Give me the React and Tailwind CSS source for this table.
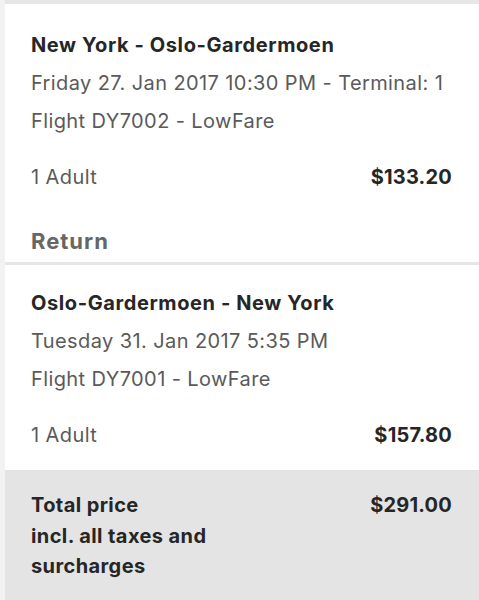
export default function App() {
  const font = { fontFamily: "Inter, 'Open Sans', sans-serif" };
  return (
    <div className="w-[479px] h-[600px] bg-[#f2f2f2] pl-[5px] overflow-hidden" style={font}>
      <div className="bg-white border-t-4 border-[#e6e6e6]">
        <div className="pl-[26px] pr-[27px] pt-[22px] pb-[2px] text-[20px] leading-[38px] tracking-[0.4px]">
          <div className="font-bold text-[#262626] tracking-[0.6px]">New York - Oslo-Gardermoen</div>
          <div className="text-[#5a5a5a]">Friday 27. Jan 2017 10:30 PM - Terminal: 1</div>
          <div className="text-[#5a5a5a]">Flight DY7002 - LowFare</div>
          <div className="mt-[18px] flex justify-between">
            <span className="text-[#5a5a5a]">1 Adult</span>
            <span className="font-bold text-[#262626] tracking-[0.2px]">$133.20</span>
          </div>
          <div className="mt-[26px] font-bold text-[22px] text-[#666666] tracking-[1px]">Return</div>
        </div>
        <div className="border-t-[3px] border-[#e6e6e6] pl-[26px] pr-[27px] pt-[19px] pb-[16px] text-[20px] leading-[38px] tracking-[0.4px]">
          <div className="font-bold text-[#262626] tracking-[0.6px]">Oslo-Gardermoen - New York</div>
          <div className="text-[#5a5a5a]">Tuesday 31. Jan 2017 5:35 PM</div>
          <div className="text-[#5a5a5a]">Flight DY7001 - LowFare</div>
          <div className="mt-[18px] flex justify-between">
            <span className="text-[#5a5a5a]">1 Adult</span>
            <span className="font-bold text-[#262626] tracking-[0.2px]">$157.80</span>
          </div>
        </div>
        <div className="bg-[#e4e4e4] h-[200px] pl-[26px] pr-[27px] pt-[20px] text-[20px] leading-[30.5px] font-bold text-[#262626] tracking-[0.4px] flex justify-between">
          <div className="w-[230px]">Total price<br />incl. all taxes and<br />surcharges</div>
          <div className="tracking-[0.2px]">$291.00</div>
        </div>
      </div>
    </div>
  );
}
